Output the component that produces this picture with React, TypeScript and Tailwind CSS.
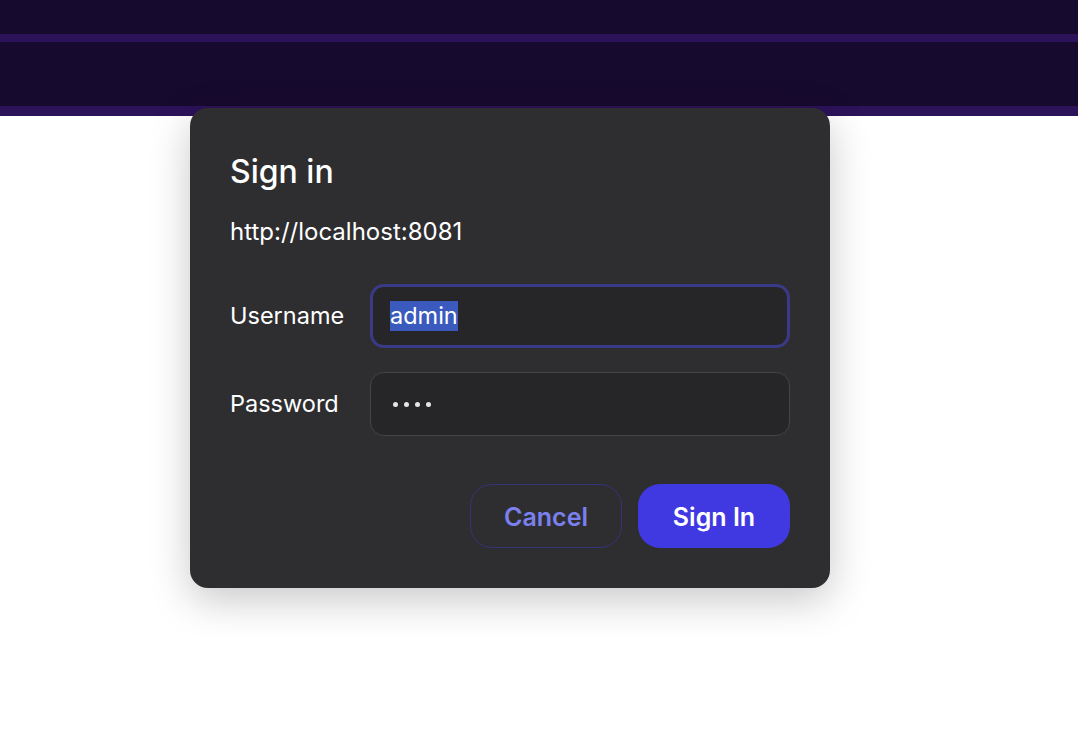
import React from "react";

export default function App() {
  return (
    <div className="relative w-[1078px] h-[730px] bg-white overflow-hidden" style={{ fontFamily: "Inter, 'Noto Sans', sans-serif" }}>
      <header className="flex flex-col">
        <div className="h-[34px] bg-[#170a2f]" />
        <div className="h-[8px] bg-[#2c1259]" />
        <div className="h-[64px] bg-[#170a2f]" />
        <div className="h-[10px] bg-[#2c1259]" />
      </header>

      <div className="absolute left-[190px] top-[108px] w-[640px] h-[480px] rounded-[18px] bg-[#2e2e30] shadow-[0_12px_40px_rgba(0,0,0,0.22)] px-[40px] pt-[42px] flex flex-col text-white">
        <h2 className="text-[32px] leading-[44px] font-medium">Sign in</h2>
        <p className="mt-[23px] text-[24px] leading-[30px]">http://localhost:8081</p>

        <div className="mt-[37px] flex flex-col gap-[24px]">
          <div className="flex items-center">
            <label className="w-[140px] text-[23.5px]">Username</label>
            <div className="flex-1 h-[64px] rounded-[14px] bg-[#262628] border-[3px] border-[#3a3a88] flex items-center px-[17px]">
              <span className="bg-[#3a5bbd] text-[23.5px] leading-[30px]">admin</span>
            </div>
          </div>
          <div className="flex items-center">
            <label className="w-[140px] text-[23.5px]">Password</label>
            <div className="flex-1 h-[64px] rounded-[14px] bg-[#262628] border border-[#444446] flex items-center px-[22px] gap-[6px]">
              {[0, 1, 2, 3].map((i) => (
                <span key={i} className="w-[5px] h-[5px] rounded-full bg-[#e5e5e5]" />
              ))}
            </div>
          </div>
        </div>

        <div className="mt-[48px] flex justify-end gap-[16px]">
          <button className="w-[152px] h-[64px] rounded-[22px] border border-[#34347a] text-[#7a80ee] text-[25px] font-semibold pt-[3px]">Cancel</button>
          <button className="w-[152px] h-[64px] rounded-[22px] bg-[#4039e1] text-white text-[25px] font-semibold pt-[3px]">Sign In</button>
        </div>
      </div>
    </div>
  );
}
